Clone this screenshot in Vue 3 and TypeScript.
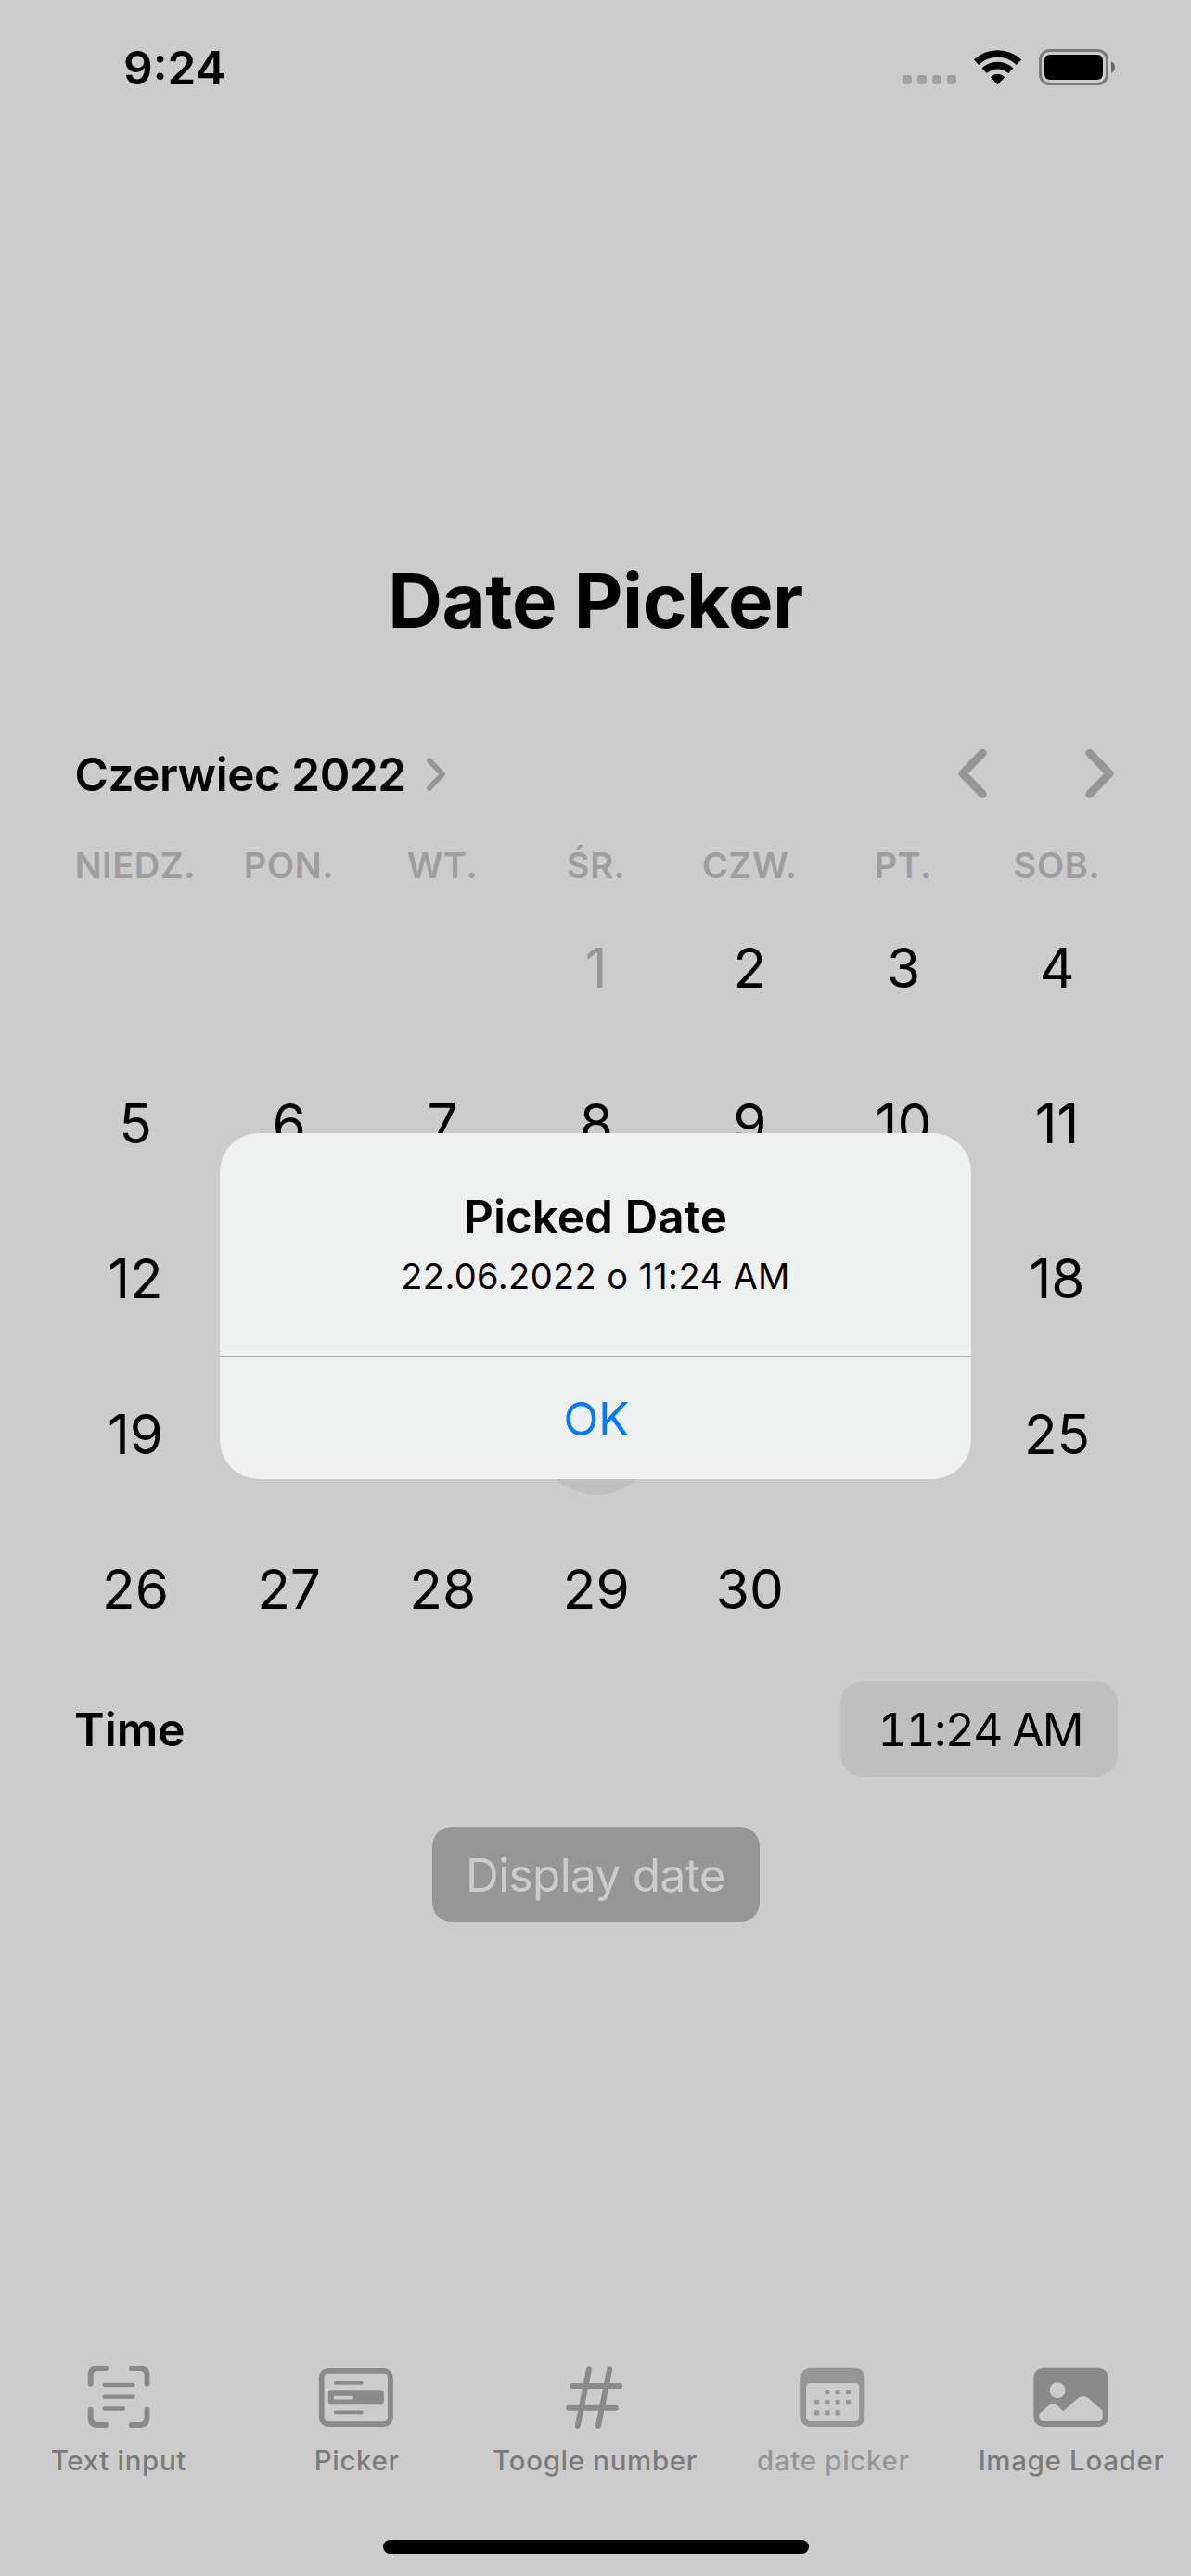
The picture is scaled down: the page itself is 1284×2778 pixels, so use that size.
<script setup lang="ts">
interface Day {
  label: string
  muted?: boolean
  selected?: boolean
}

const weekdays: string[] = ['NIEDZ.', 'PON.', 'WT.', 'ŚR.', 'CZW.', 'PT.', 'SOB.']

const leadingBlanks = 3
const selectedDay = 22

// Days that lie completely beneath the alert carry no label.
const isCovered = (n: number): boolean => (n >= 13 && n <= 17) || (n >= 20 && n <= 24)

const days: Day[] = [
  ...Array.from({ length: leadingBlanks }, (): Day => ({ label: '' })),
  ...Array.from({ length: 30 }, (_, i): Day => ({
    label: isCovered(i + 1) ? '' : String(i + 1),
    muted: i === 0,
    selected: i + 1 === selectedDay,
  })),
]
</script>

<template>
  <div class="screen">
    <header class="status">
      <span class="clock">9:24</span>
      <div class="indicators">
        <svg width="58" height="45" viewBox="99 90 174 135" fill="#a1a1a1">
          <rect x="99" y="183" width="30" height="30" rx="9" />
          <rect x="147" y="183" width="30" height="30" rx="9" />
          <rect x="195" y="183" width="30" height="30" rx="9" />
          <rect x="243" y="183" width="30" height="30" rx="9" />
        </svg>
        <svg width="51" height="45" viewBox="330 90 153 135" fill="none" stroke="#000" stroke-width="23">
          <path d="M337.5 141.5A100 100 0 0 1 475.5 141.5" />
          <path d="M363.5 169A62 62 0 0 1 449.5 169" />
          <path d="M386 190Q406.5 172 427 190L406.5 211Z" fill="#000" stroke-width="4" stroke-linejoin="round" />
        </svg>
        <svg width="83" height="45" viewBox="540 90 249 135">
          <rect x="544.5" y="103.5" width="216" height="108" rx="30" fill="none" stroke="#7b7b7b" stroke-width="9" />
          <rect x="558" y="117" width="189" height="81" rx="17" fill="#000" />
          <path d="M774 139Q786 145 786 157.5Q786 170 774 176Z" fill="#666" />
        </svg>
      </div>
    </header>

    <h1 class="title">Date Picker</h1>

    <section class="calendar">
      <div class="month">
        <span class="month-name">Czerwiec 2022</span>
        <svg class="month-chevron" width="22" height="38" viewBox="0 0 22 38" fill="none" stroke="#969696" stroke-width="5.6" stroke-linecap="round" stroke-linejoin="round">
          <path d="M3.8 4L18 19L3.8 34" />
        </svg>
        <div class="month-nav">
          <svg width="31" height="54" viewBox="0 0 31 54" fill="none" stroke="#969696" stroke-width="8.6" stroke-linecap="round" stroke-linejoin="round">
            <path d="M26.5 5L4.8 27.2L26.5 49.4" />
          </svg>
          <svg width="31" height="54" viewBox="0 0 31 54" fill="none" stroke="#969696" stroke-width="8.6" stroke-linecap="round" stroke-linejoin="round">
            <path d="M4.5 5L26.2 27.2L4.5 49.4" />
          </svg>
        </div>
      </div>
      <div class="weekdays">
        <span v-for="name in weekdays" :key="name">{{ name }}</span>
      </div>
      <div class="days">
        <span v-for="(day, i) in days" :key="i" class="day" :class="{ muted: day.muted }">
          <span :class="{ selected: day.selected }">{{ day.label }}</span>
        </span>
      </div>
    </section>

    <div class="time-row">
      <span class="time-label">Time</span>
      <span class="time-value">11:24 AM</span>
    </div>

    <button class="display-button" type="button">Display date</button>

    <nav class="tabs">
      <div class="tab">
        <svg width="90" height="72" viewBox="160 54 270 216" fill="none" stroke="#8a8a8a" stroke-linecap="round">
          <path stroke-width="17.5" d="M204 122V95Q204 72.500 227 72.500H253M336.500 72.500H363Q386.500 72.500 386.500 95V122M386.500 206V232Q386.500 255 363 255H336.500M253 255H227Q204 255 204 232V206" />
          <path stroke-width="13" d="M249 126H341.500M249 164H341.500M249 202.500H309.500" />
        </svg>
        <span>Text input</span>
      </div>
      <div class="tab">
        <svg width="90" height="72" viewBox="930.6 54 270 216" fill="none" stroke="#8a8a8a" stroke-linecap="round">
          <rect x="950.7" y="80.7" width="222.6" height="171.6" rx="21" stroke-width="17.5" />
          <path stroke-width="11" d="M995 119.500H1080.500M995 214H1080.500" />
          <rect x="972" y="142" width="180.500" height="47.500" rx="12" fill="#8a8a8a" stroke="none" />
          <path stroke="#ccc" stroke-width="11" d="M995 167H1047.500" />
        </svg>
        <span>Picker</span>
      </div>
      <div class="tab">
        <svg width="90" height="72" viewBox="411 54 270 216" fill="none" stroke="#8a8a8a" stroke-linecap="round" stroke-width="18">
          <path d="M525 75.500L488.500 258M591.500 75.500L555 258M472.500 129H624.500M459 200H611.500" />
        </svg>
        <span>Toogle number</span>
      </div>
      <div class="tab active">
        <svg width="90" height="72" viewBox="161.4 54 270 216" fill="#969696">
          <rect x="189" y="71.5" width="207" height="189.5" rx="30" />
          <rect x="206.5" y="120" width="171.5" height="123" rx="13" fill="#ccc" />
          <g>
            <rect x="267" y="141" width="16" height="16" rx="3" />
            <rect x="301" y="141" width="16" height="16" rx="3" />
            <rect x="335" y="141" width="16" height="16" rx="3" />
            <rect x="233" y="174" width="16" height="16" rx="3" />
            <rect x="267" y="174" width="16" height="16" rx="3" />
            <rect x="301" y="174" width="16" height="16" rx="3" />
            <rect x="335" y="174" width="16" height="16" rx="3" />
            <rect x="233" y="207.5" width="16" height="16" rx="3" />
            <rect x="267" y="207.5" width="16" height="16" rx="3" />
            <rect x="301" y="207.5" width="16" height="16" rx="3" />
          </g>
        </svg>
        <span>date picker</span>
      </div>
      <div class="tab">
        <svg width="90" height="72" viewBox="931.8 54 270 216" fill="#ccc">
          <rect x="942" y="71.5" width="240.5" height="189.5" rx="30" fill="#8a8a8a" />
          <circle cx="1019" cy="143" r="25.5" />
          <path d="M959.500 220L990 193Q1004 181 1018 192L1037.500 210.500L1083 170Q1102 154 1121 170L1165 209V228Q1165 243 1150 243H975Q959.500 243 959.500 228Z" />
        </svg>
        <span>Image Loader</span>
      </div>
    </nav>
    <div class="home-indicator"></div>

    <div class="alert" role="alertdialog">
      <div class="alert-body">
        <strong class="alert-title">Picked Date</strong>
        <span class="alert-message">22.06.2022 o 11:24 AM</span>
      </div>
      <button class="alert-action" type="button">OK</button>
    </div>
  </div>
</template>

<style>
body {
  margin: 0;
  background: #ccc;
}
</style>

<style scoped>
.screen {
  position: relative;
  display: flex;
  flex-direction: column;
  width: 1284px;
  height: 2778px;
  overflow: hidden;
  background: #ccc;
  color: #000;
  font-family: Inter, "Liberation Sans", sans-serif;
  font-size: 49.5px;
  white-space: nowrap;
}

svg {
  display: block;
  flex: none;
}

button {
  border: 0;
  padding: 0;
  font: inherit;
}

.status {
  display: flex;
  justify-content: space-between;
  align-items: center;
  height: 146px;
  padding: 0 81px 0 133px;
}

.clock {
  font-weight: 600;
}

.indicators {
  display: flex;
  gap: 19px;
  margin-bottom: 1px;
}

.title {
  margin: 452px 0 0;
  height: 100px;
  line-height: 100px;
  font-size: 81.5px;
  font-weight: 700;
  letter-spacing: -0.5px;
  text-align: center;
}

.calendar {
  margin-top: 106px;
}

.month {
  display: flex;
  align-items: center;
  height: 61px;
  padding: 0 83px 0 80.5px;
  font-weight: 600;
}

.month-name {
  letter-spacing: -0.46px;
}

.month-chevron {
  margin-left: 21px;
}

.month-nav {
  display: flex;
  gap: 106px;
  margin-bottom: 2px;
  margin-left: auto;
}

.weekdays,
.days {
  display: grid;
  grid-template-columns: repeat(7, 165.6px);
  margin-left: 63px;
}

.weekdays {
  margin-top: 43px;
  height: 50px;
  line-height: 50px;
  font-size: 38px;
  font-weight: 600;
  letter-spacing: 0.6px;
  color: #9e9e9e;
  text-align: center;
}

.days {
  margin-top: 2px;
  margin-left: 63.2px;
  grid-auto-rows: 167.5px;
  font-size: 58.5px;
}

.day {
  display: flex;
  align-items: center;
  justify-content: center;
}

.muted {
  color: #969696;
}

.selected {
  width: 132px;
  height: 132px;
  border-radius: 50%;
  background: #bfbfbf;
}

.time-row {
  display: flex;
  align-items: center;
  justify-content: space-between;
  margin-top: 15px;
  height: 103px;
  padding: 0 79px 0 80px;
}

.time-label {
  height: 103px;
  line-height: 105px;
  font-weight: 600;
}

.time-value {
  box-sizing: border-box;
  width: 299px;
  height: 103px;
  padding-left: 2px;
  line-height: 105px;
  border-radius: 24px;
  background: #bfbfbf;
  text-align: center;
  font-feature-settings: "tnum";
  letter-spacing: -1.65px;
}

.display-button {
  align-self: center;
  margin-top: 54px;
  width: 353px;
  height: 103px;
  line-height: 105px;
  border-radius: 21px;
  background: #969696;
  color: #ccc;
  letter-spacing: -0.65px;
}

.tabs {
  display: flex;
  margin-top: 475px;
}

.tab {
  display: flex;
  flex: 1;
  flex-direction: column;
  align-items: center;
  font-size: 29.5px;
  font-weight: 500;
  letter-spacing: 0.66px;
  color: #7b7b7b;
}

.tab span {
  margin-top: 13px;
  margin-right: 1px;
  height: 40px;
  line-height: 40px;
}

.tab.active {
  color: #969696;
}

.home-indicator {
  align-self: center;
  margin-top: 66px;
  width: 459px;
  height: 15px;
  border-radius: 8px;
  background: #000;
}

.alert {
  position: absolute;
  top: 1222px;
  left: 237px;
  display: flex;
  flex-direction: column;
  width: 810px;
  height: 373px;
  overflow: hidden;
  border-radius: 42px;
  background: linear-gradient(90deg, #eff1f0, #eff0f0 20%, #eff0f0 80%, #eff1f0);
}

.alert-body {
  display: flex;
  flex: 1;
  flex-direction: column;
  align-items: center;
  padding-top: 60px;
  border-bottom: 1px solid #b0b0b0;
}

.alert-title {
  height: 60px;
  line-height: 60px;
  font-weight: 600;
}

.alert-message {
  height: 48px;
  margin-top: 10px;
  line-height: 48px;
  font-size: 38px;
  letter-spacing: 0.38px;
}

.alert-action {
  height: 132px;
  padding: 2px 0 0 2px;
  background: none;
  color: #007aff;
}
</style>
